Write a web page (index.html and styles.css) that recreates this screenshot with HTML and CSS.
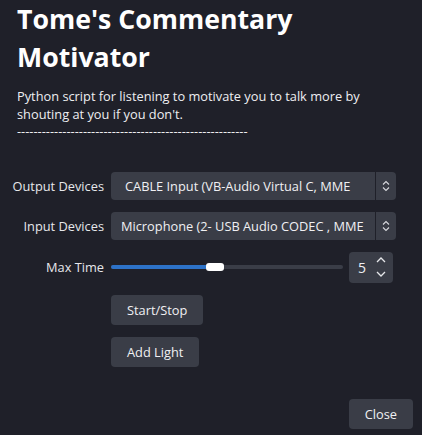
FILE: index.html
```html
<!DOCTYPE html>
<html>
<head>
<meta charset="utf-8">
<link rel="stylesheet" href="styles.css">
</head>
<body>
<div class="page">
  <header class="head">
    <h1 class="title">Tome's Commentary<br>Motivator</h1>
    <p class="desc">Python script for listening to motivate you to talk more by<br>shouting at you if you don't.<br>--------------------------------------------------------</p>
  </header>
  <div class="form">
    <label class="lbl">Output Devices</label>
    <div class="combo">
      <span class="combo-text out">CABLE Input (VB-Audio Virtual C, MME</span>
      <span class="combo-btn">
        <svg width="8" height="12" viewBox="0 0 8 12"><path d="M1 4.5 L4 1.5 L7 4.5 M1 7.5 L4 10.5 L7 7.5" fill="none" stroke="#d8d9de" stroke-width="1.1"/></svg>
      </span>
    </div>
    <label class="lbl">Input Devices</label>
    <div class="combo">
      <span class="combo-text in">Microphone (2- USB Audio CODEC , MME</span>
      <span class="combo-btn">
        <svg width="8" height="12" viewBox="0 0 8 12"><path d="M1 4.5 L4 1.5 L7 4.5 M1 7.5 L4 10.5 L7 7.5" fill="none" stroke="#d8d9de" stroke-width="1.1"/></svg>
      </span>
    </div>
    <label class="lbl">Max Time</label>
    <div class="slider-row">
      <div class="slider">
        <div class="groove"><div class="fill" style="width:95px"></div></div>
        <div class="handle" style="left:95px"></div>
      </div>
      <div class="spin">
        <span class="spin-val">5</span>
        <span class="spin-btns">
          <svg width="10" height="6" viewBox="0 0 10 6"><path d="M1 5 L5 1 L9 5" fill="none" stroke="#e6e7ea" stroke-width="1.3"/></svg>
          <svg width="10" height="6" viewBox="0 0 10 6"><path d="M1 1 L5 5 L9 1" fill="none" stroke="#e6e7ea" stroke-width="1.3"/></svg>
        </span>
      </div>
    </div>
    <span></span>
    <div class="btn-wrap"><button class="btn">Start/Stop</button></div>
    <span></span>
    <div class="btn-wrap"><button class="btn">Add Light</button></div>
  </div>
  <footer class="foot">
    <button class="btn">Close</button>
  </footer>
</div>
</body>
</html>
```

FILE: styles.css
```css
html, body {
  margin: 0;
  padding: 0;
  background: #1f2029;
}
body {
  width: 422px;
  height: 435px;
  overflow: hidden;
  font-family: "Open Sans", "DejaVu Sans", sans-serif;
  color: #f2f2f4;
}
.page {
  display: flex;
  flex-direction: column;
  height: 435px;
}
.head {
  padding-left: 17px;
}
.title {
  margin: 0;
  font-size: 26.7px;
  font-weight: 700;
  line-height: 38px;
  color: #ffffff;
}
.desc {
  margin: 12px 0 0 0;
  font-size: 12.8px;
  line-height: 17.5px;
  color: #eeeef1;
}
.form {
  margin-top: 31px;
  display: grid;
  grid-template-columns: 104px 285px;
  column-gap: 7px;
  row-gap: 12px;
  align-items: center;
}
.lbl {
  text-align: right;
  font-size: 12.8px;
  color: #e6e7eb;
}
.combo {
  display: flex;
  height: 28px;
  background: #3a3d47;
  border-radius: 4px;
  overflow: hidden;
}
.combo-text {
  flex: 1;
  display: flex;
  align-items: center;
  font-size: 12.8px;
  color: #f0f0f3;
  white-space: nowrap;
  overflow: hidden;
}
.combo-text.out { padding-left: 14px; }
.combo-text.in { padding-left: 10px; }
.combo-btn {
  width: 20px;
  border-left: 1px solid #1f2029;
  display: flex;
  align-items: center;
  justify-content: center;
}
.slider-row {
  display: flex;
  align-items: center;
  height: 31px;
}
.slider {
  position: relative;
  width: 232px;
  height: 8px;
  display: flex;
  align-items: center;
}
.groove {
  width: 100%;
  height: 4px;
  border-radius: 2px;
  background: #3a3d47;
  overflow: hidden;
}
.fill {
  height: 100%;
  background: #2d72c8;
}
.handle {
  position: absolute;
  top: 0;
  width: 18px;
  height: 8px;
  border-radius: 3px;
  background: #ffffff;
}
.spin {
  margin-left: 6px;
  width: 44px;
  height: 31px;
  background: #3a3d47;
  border-radius: 4px;
  display: flex;
  align-items: center;
}
.spin-val {
  padding-left: 9px;
  width: 16px;
  font-size: 14px;
  color: #f0f0f3;
}
.spin-btns {
  display: flex;
  flex-direction: column;
  gap: 8px;
  margin-left: 2px;
}
.spin-btns svg { display: block; }
.btn-wrap {
  display: flex;
}
.btn {
  height: 30px;
  padding: 0 16px;
  border: none;
  border-radius: 4px;
  background: #3a3d47;
  color: #f0f0f3;
  font-family: "Open Sans", "DejaVu Sans", sans-serif;
  font-size: 12.8px;
}
.foot {
  margin-top: 32px;
  display: flex;
  justify-content: flex-end;
  padding-right: 9px;
}
```
